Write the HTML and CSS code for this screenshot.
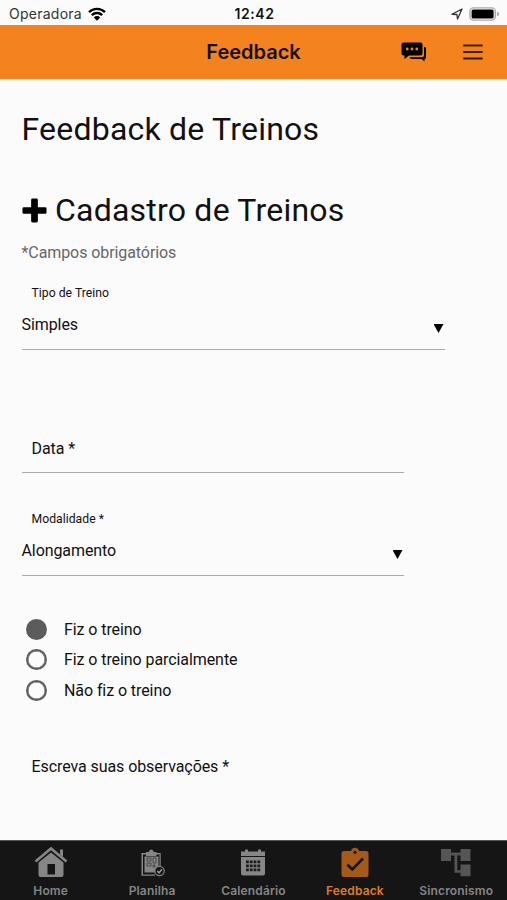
FILE: index.html
```html
<!DOCTYPE html>
<html lang="pt-BR">
<head>
    <meta charset="UTF-8">
    <meta name="viewport" content="width=device-width, initial-scale=1.0">
    <title>Feedback</title>
    <link rel="stylesheet" href="styles.css">
</head>
<body>
    <!-- Status bar -->
    <div class="status-bar">
        <div class="carrier">
            <span>Operadora</span>
            <svg class="wifi" viewBox="0 0 18 14">
                <path d="M1 5.2a11.5 11.5 0 0 1 16 0M3.8 8.1a7.5 7.5 0 0 1 10.4 0" fill="none" stroke="#000" stroke-width="2.3"/>
                <path d="M5.8 10.4a4.6 4.6 0 0 1 6.4 0L9 13.7z"/>
            </svg>
        </div>
        <div class="clock">12:42</div>
        <div class="indicators">
            <svg class="location" viewBox="0 0 12 12">
                <path d="M1 6.3L11 1 6.500 11 5.900 6.500z" fill="none" stroke="#333" stroke-width="1.300" stroke-linejoin="round"/>
            </svg>
            <svg class="battery" viewBox="0 0 31 14">
                <rect x=".9" y=".9" width="25.4" height="12.2" rx="3.6" fill="#fbfbfb" stroke="#aaa" stroke-width="1.4"/>
                <rect x="2.6" y="2.4" width="22" height="9.2" rx="1.6"/>
                <path d="M28 4.7q2.2.6 2.2 2.3T28 9.3z" fill="#aaa"/>
            </svg>
        </div>
    </div>

    <!-- Header -->
    <header class="toolbar">
        <h1>Feedback</h1>
        <div class="actions">
            <svg class="chat" viewBox="0 0 26 20">
                <path d="M2.5 .5h17q2 0 2 2v9q0 2-2 2H8L3.500 17v-3.500h-1q-2 0-2-2v-9q0-2 2-2z"/>
                <path d="M23 5h.5q1.500 0 1.500 1.500v9q0 1.500-1.500 1.500v2.500l-3-2.500H11q-2 0-2.500-1.700h12.500q2 0 2-2z"/>
                <g fill="#f4831f">
                    <circle cx="6.200" cy="7" r="1.400"/>
                    <circle cx="11" cy="7" r="1.400"/>
                    <circle cx="15.800" cy="7" r="1.400"/>
                </g>
            </svg>
            <svg class="menu" viewBox="0 0 20 16">
                <path d="M.3 1.500h19.400M.3 8h19.400M.3 14.500h19.400" stroke="#3a1c00" stroke-width="1.900"/>
            </svg>
        </div>
    </header>

    <!-- Form -->
    <main class="content">
        <h2>Feedback de Treinos</h2>
        <h2 class="subtitle">
            <svg class="plus" viewBox="0 0 26 26">
                <path d="M11 .5h4q1.500 0 1.500 1.500v7.500H24q1.500 0 1.500 1.500v4q0 1.500-1.500 1.500h-7.500V24q0 1.500-1.500 1.500h-4q-1.500 0-1.500-1.500v-7.500H2Q.5 16.500.5 15v-4Q.5 9.500 2 9.500h7.500V2Q9.500.5 11 .5z"/>
            </svg>
            <span>Cadastro de Treinos</span>
        </h2>
        <p class="hint">*Campos obrigatórios</p>

        <div class="field type">
            <label>Tipo de Treino</label>
            <div class="select"><span>Simples</span><i class="arrow"></i></div>
        </div>

        <div class="field date">
            <div class="placeholder">Data *</div>
        </div>

        <div class="field">
            <label>Modalidade *</label>
            <div class="select"><span>Alongamento</span><i class="arrow"></i></div>
        </div>

        <div class="radios">
            <div class="radio"><i class="dot checked"></i><span>Fiz o treino</span></div>
            <div class="radio"><i class="dot"></i><span>Fiz o treino parcialmente</span></div>
            <div class="radio"><i class="dot"></i><span>Não fiz o treino</span></div>
        </div>

        <div class="notes">Escreva suas observações *</div>
    </main>

    <!-- Tabs -->
    <nav class="tabs">
        <div class="tab">
            <svg viewBox="0 0 34 32">
                <path d="M1.500 15.500L17 2.500l15.500 13" fill="none" stroke="#868686" stroke-width="2.600"/>
                <path d="M26 3.500h3V11l-3-2.500z"/>
                <path d="M17 6.500L29.500 16.500V29q0 2-2 2h-21q-2 0-2-2V16.500zM13.500 18v10.500H21V18z" fill-rule="evenodd"/>
            </svg>
            <span>Home</span>
        </div>
        <div class="tab">
            <svg viewBox="0 0 34 32">
                <path d="M6.500 7H11V6h3q0-2.500 2.300-2.500T18.600 6h3v1h4.100v15h-1.200V8.500h-3V10H11V8.500H8v20h12v1.200H6.500z"/>
                <path d="M9.500 10.500h14v11q-3.500 1.500-3.500 5H9.500z"/>
                <path d="M12 12h4v3h-4zM18 12h3v5h-3zM12 17h4v3h-4zM18 19h2v2h-2z" fill="none" stroke="#444" stroke-width=".9"/>
                <circle cx="24.500" cy="25" r="4.700" fill="#151515" stroke="#868686" stroke-width="1.200"/>
                <path d="M22.300 25l1.700 1.800 3-3.500" fill="none" stroke="#999" stroke-width="1.500"/>
            </svg>
            <span>Planilha</span>
        </div>
        <div class="tab">
            <svg viewBox="0 0 34 32">
                <path d="M5 5.500h4V4q1.500-1.500 3 0v1.500h10V4q1.500-1.500 3 0v1.500h4V10H5z"/>
                <path d="M5 11h24v16.500q0 2-2 2H7q-2 0-2-2z"/>
                <path d="M10 14.500h2.800v2.800H10zM13.800 14.500h2.800v2.800h-2.800zM17.600 14.500h2.800v2.800h-2.800zM21.400 14.500h2.800v2.800h-2.800zM10 18.500h2.800v2.800H10zM13.800 18.500h2.800v2.800h-2.800zM17.600 18.500h2.800v2.800h-2.800zM21.400 18.500h2.800v2.800h-2.800zM10 22.500h2.800v2.800H10zM13.800 22.500h2.800v2.800h-2.800zM17.600 22.500h2.800v2.800h-2.800zM21.400 22.500h2.800v2.800h-2.800z" fill="#1c1c1c"/>
            </svg>
            <span>Calendário</span>
        </div>
        <div class="tab active">
            <svg viewBox="0 0 34 32">
                <path d="M6 5h7q1-3.200 4-3.200T21 5h7q2.500 0 2.500 2.500v21Q30.500 31 28 31H6q-2.500 0-2.500-2.500v-21Q3.500 5 6 5z"/>
                <circle cx="17" cy="6.200" r="1.500" fill="#151515"/>
                <path d="M9.300 18.500l5 5L25 12.500" fill="none" stroke="#151515" stroke-width="2.600"/>
            </svg>
            <span>Feedback</span>
        </div>
        <div class="tab sync">
            <svg viewBox="0 0 34 32">
                <path d="M2 3h10v3.500h9.500V3h10v12h-10V9.500h-3.200v14.700h3.200V18.500h10v11.700h-10v-3.500h-6V9.500H12V15H2z"/>
            </svg>
            <span>Sincronismo</span>
        </div>
    </nav>
</body>
</html>
```
FILE: styles.css
```css
/* Global Styles */
* {
    box-sizing: border-box;
}

body {
    font-family: Roboto, sans-serif;
    background-color: #fbfbfb;
    color: #111;
    display: flex;
    flex-direction: column;
    height: 900px;
    margin: 0;
    overflow: hidden;
}

h1, h2, p {
    margin: 0;
}

svg {
    display: block;
    flex: none;
}

/* Status Bar */
.status-bar {
    display: grid;
    grid-template-columns: 1fr auto 1fr;
    align-items: center;
    height: 25px;
    padding: 2px 7px 0 9px;
    font-family: Inter, sans-serif;
    font-size: 14px;
}

.carrier {
    display: flex;
    align-items: center;
    gap: 6px;
    color: #333;
    letter-spacing: 0.25px;
}

.wifi {
    width: 18px;
    height: 14px;
}

.clock {
    font-weight: 600;
    letter-spacing: 0.6px;
}

.indicators {
    display: flex;
    justify-content: flex-end;
    align-items: center;
    gap: 6px;
}

.location {
    width: 12px;
    height: 12px;
}

.battery {
    width: 31px;
    height: 14px;
}

/* Header */
.toolbar {
    display: grid;
    grid-template-columns: 1fr auto 1fr;
    align-items: center;
    height: 54px;
    padding: 0 24px;
    background-color: #f4831f;
}

.toolbar h1 {
    grid-column: 2;
    font-family: Inter, sans-serif;
    font-size: 20px;
    font-weight: 600;
}

.actions {
    display: flex;
    justify-content: flex-end;
    align-items: center;
    gap: 36px;
}

.chat {
    width: 26px;
    height: 20px;
}

.menu {
    width: 20px;
    height: 16px;
}

/* Form */
.content {
    flex: 1;
    padding: 30px 21.5px 0;
    font-size: 16px;
    letter-spacing: -0.08px;
}

h2 {
    font-size: 32px;
    font-weight: 400;
    line-height: 40px;
    letter-spacing: 0.22px;
}

.subtitle {
    display: flex;
    align-items: center;
    gap: 8.5px;
    margin-top: 41px;
}

.plus {
    width: 25px;
    height: 25px;
}

.hint {
    margin-top: 13px;
    line-height: 20px;
    color: #666;
}

.field {
    width: 382.5px;
    height: 65px;
    border-bottom: 1px solid #aaa;
}

.field label {
    display: block;
    padding-left: 10px;
    font-size: 12.2px;
    line-height: 16px;
    letter-spacing: 0.03px;
}

.field.type {
    width: 423.5px;
    margin-top: 22px;
}

.select {
    display: flex;
    justify-content: space-between;
    padding-top: 13px;
    line-height: 22px;
}

.arrow {
    width: 10px;
    height: 9px;
    margin: 10px 1.5px 0 0;
    background-color: #000;
    clip-path: polygon(0 0, 100% 0, 50% 100%);
}

.field.date {
    height: 44px;
    margin: 79px 0 38px;
}

.placeholder {
    padding: 9px 0 0 10px;
    line-height: 22px;
}

.radios {
    padding: 38px 0 0 4px;
}

.radio {
    display: flex;
    align-items: center;
    gap: 17.5px;
    height: 30.5px;
}

.dot {
    width: 21px;
    height: 21px;
    border: 2px solid #5c5c5c;
    border-radius: 50%;
    box-shadow: inset 0 0 0 0.5px #5c5c5c;
}

.dot.checked {
    background-color: #5c5c5c;
}

.notes {
    margin-top: 50px;
    padding-left: 10px;
    line-height: 22px;
}

/* Tabs */
.tabs {
    display: grid;
    grid-template-columns: repeat(5, 1fr);
    height: 60px;
    border-top: 1px solid #555;
    background-color: #151515;
}

.tab {
    display: flex;
    flex-direction: column;
    align-items: center;
    padding-top: 5px;
    font-family: Inter, sans-serif;
    font-size: 12px;
    font-weight: 600;
    line-height: 16px;
    letter-spacing: 0.15px;
    color: #858585;
}

.tab svg {
    width: 34px;
    height: 32px;
    margin-bottom: 5px;
    fill: #868686;
}

.tab.active {
    color: #e07c20;
}

.tab.active svg {
    fill: #a65a18;
}

.tab.sync svg {
    fill: #555;
}
```
